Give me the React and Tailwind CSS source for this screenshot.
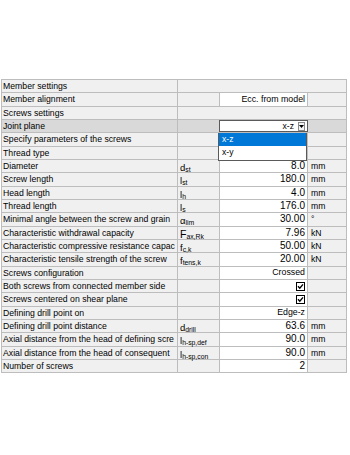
import React from "react";

const rows = [
  { label: "Member settings", kind: "header" },
  { label: "Member alignment", value: "Ecc. from model" },
  { label: "Screws settings", kind: "header" },
  { label: "Joint plane", kind: "combo" },
  { label: "Specify parameters of the screws", value: "" },
  { label: "Thread type", value: "" },
  { label: "Diameter", sym: ["d", "st"], value: "8.0", unit: "mm", num: true },
  { label: "Screw length", sym: ["l", "st"], value: "180.0", unit: "mm", num: true },
  { label: "Head length", sym: ["l", "h"], value: "4.0", unit: "mm", num: true },
  { label: "Thread length", sym: ["l", "s"], value: "176.0", unit: "mm", num: true },
  { label: "Minimal angle between the screw and grain", sym: ["α", "lim"], value: "30.00", unit: "°", num: true },
  { label: "Characteristic withdrawal capacity", sym: ["F", "ax,Rk"], value: "7.96", unit: "kN", num: true },
  // cut in the grid, same as the reference
  { label: "Characteristic compressive resistance capac", sym: ["f", "c,k"], value: "50.00", unit: "kN", num: true },
  { label: "Characteristic tensile strength of the screw", sym: ["f", "tens,k"], value: "20.00", unit: "kN", num: true },
  { label: "Screws configuration", value: "Crossed" },
  { label: "Both screws from connected member side", check: true },
  { label: "Screws centered on shear plane", check: true },
  { label: "Defining drill point on", value: "Edge-z" },
  { label: "Defining drill point distance", sym: ["d", "drill"], value: "63.6", unit: "mm", num: true },
  { label: "Axial distance from the head of defining scre", sym: ["l", "h-sp,def"], value: "90.0", unit: "mm", num: true },
  { label: "Axial distance from the head of consequent", sym: ["l", "h-sp,con"], value: "90.0", unit: "mm", num: true },
  { label: "Number of screws", value: "2", num: true },
];

function CheckBox() {
  return (
    <svg width="9" height="9" viewBox="0 0 9 9" className="block">
      <rect x="0.5" y="0.5" width="8" height="8" fill="#fff" stroke="#000" />
      <path d="M2 4.3 L3.8 6.2 L7 2.4" fill="none" stroke="#000" strokeWidth="1.4" />
    </svg>
  );
}

function Symbol({ sym }) {
  if (!sym) return null;
  const big = sym[0] === "F";
  return (
    <span className="whitespace-nowrap leading-none">
      <span className={big ? "text-[10.5px]" : "text-[9.5px]"}>{sym[0]}</span>
      <span className="relative top-[1px] text-[6.8px]">{sym[1]}</span>
    </span>
  );
}

function Row({ row }) {
  const combo = row.kind === "combo";
  const bg = combo ? "bg-[#d9d9d9]" : "bg-[#f0f0f0]";
  return (
    <div className={`flex h-[13.33px] border-b border-[#bdbdbd] ${bg}`}>
      <div className="w-[176px] shrink-0 border-r border-[#bdbdbd] pl-[1px] text-[8.7px] leading-[12.3px] whitespace-nowrap overflow-hidden">
        {row.label}
      </div>
      {row.kind === "header" ? (
        <div className="flex-1" />
      ) : (
        <>
          <div className="w-[41px] shrink-0 pl-[2px] flex items-center">
            <Symbol sym={row.sym} />
          </div>
          {combo ? (
            <div className="w-[89px] shrink-0 border border-[#5a5a5a] bg-white flex items-center justify-end pr-[2px]">
              <span className="text-[8.6px] leading-none mr-[4px]">x-z</span>
              <span className="w-[7px] h-[9px] border border-[#8a8a8a] bg-[#f4f4f4] flex items-center justify-center">
                <svg width="5" height="3" viewBox="0 0 5 3">
                  <path d="M0 0 H5 L2.5 3 Z" fill="#000" />
                </svg>
              </span>
            </div>
          ) : (
            <div
              className={`w-[89px] shrink-0 border-x border-[#bdbdbd] bg-white flex items-center justify-end pr-[2px] ${
                row.num ? "text-[10px]" : "text-[8.8px]"
              }`}
            >
              {row.check ? <CheckBox /> : <span className="leading-none">{row.value}</span>}
            </div>
          )}
          <div className="flex-1 pl-[3px] text-[8.6px] leading-[12.3px]">{row.unit}</div>
        </>
      )}
    </div>
  );
}

export default function App() {
  return (
    <div className="w-[350px] h-[455px] bg-white pt-[79px] pl-[1px] font-['Liberation_Sans',Arial,sans-serif] text-black">
      <div className="relative w-[346px] border-t border-x border-[#bdbdbd]">
        {rows.map((row) => (
          <Row key={row.label} row={row} />
        ))}
        {/* open list of the Joint plane combo */}
        <div className="absolute left-[216px] top-[53px] w-[89px] border border-[#5a5a5a] border-t-0 bg-white text-[8.6px]">
          <div className="h-[13.33px] bg-[#0078d7] text-white pl-[3px] leading-[13px]">x-z</div>
          <div className="h-[13.33px] pl-[3px] leading-[13px]">x-y</div>
        </div>
      </div>
    </div>
  );
}
